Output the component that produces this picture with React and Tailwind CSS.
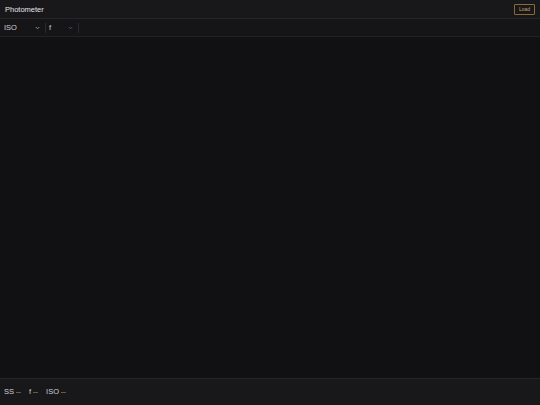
import React from 'react';

const Chevron = () => (
  <svg width="5" height="4" viewBox="0 0 10 8" className="text-[#9a9aa0]">
    <path d="M1.5 2l3.5 3.5L8.5 2" fill="none" stroke="currentColor" strokeWidth="1.8" />
  </svg>
);

const Stat = ({ label }) => (
  <span className="flex items-center gap-[2px]">
    <span className="text-[#cfcfd4]">{label}</span>
    <span className="w-[5px] h-[1px] mt-[1px] bg-[#6e5a3a]" />
  </span>
);

export default function App() {
  return (
    <div className="w-[540px] h-[405px] flex flex-col bg-[#111113] text-[#d8d8dc] font-['Liberation_Sans',Arial,sans-serif] overflow-hidden">
      {/* header */}
      <div className="h-[19px] flex items-center justify-between px-[5px] bg-[#18181a] border-b border-[#26262a]">
        <span className="text-[7.5px] mt-[1px] text-[#e4e4e8]">Photometer</span>
        <button className="h-[11px] px-[4px] mt-[1px] border border-[#8a6a34] rounded-[1px] text-[5px] leading-none text-[#c9a063]">
          Load
        </button>
      </div>
      {/* toolbar */}
      <div className="h-[18px] flex items-center px-[4px] bg-[#151517] border-b border-[#222226]">
        <div className="w-[38px] flex items-center justify-between pr-[2px]">
          <span className="text-[7.5px] text-[#cfcfd4]">ISO</span>
          <Chevron />
        </div>
        <div className="w-px h-[10px] bg-[#2a2a2e] mx-[3px]" />
        <div className="w-[26px] flex items-center justify-between pr-[2px]">
          <span className="text-[7.5px] text-[#cfcfd4]">f</span>
          <span className="opacity-50"><Chevron /></span>
        </div>
        <div className="w-px h-[10px] bg-[#2a2a2e] mx-[3px]" />
      </div>
      {/* canvas */}
      <div className="flex-1 bg-[#111113]" />
      {/* footer */}
      <div className="h-[27px] flex items-center gap-[8px] px-[4px] bg-[#18181a] border-t border-[#26262a] text-[7.5px]">
        <Stat label="SS" />
        <Stat label="f" />
        <Stat label="ISO" />
      </div>
    </div>
  );
}
